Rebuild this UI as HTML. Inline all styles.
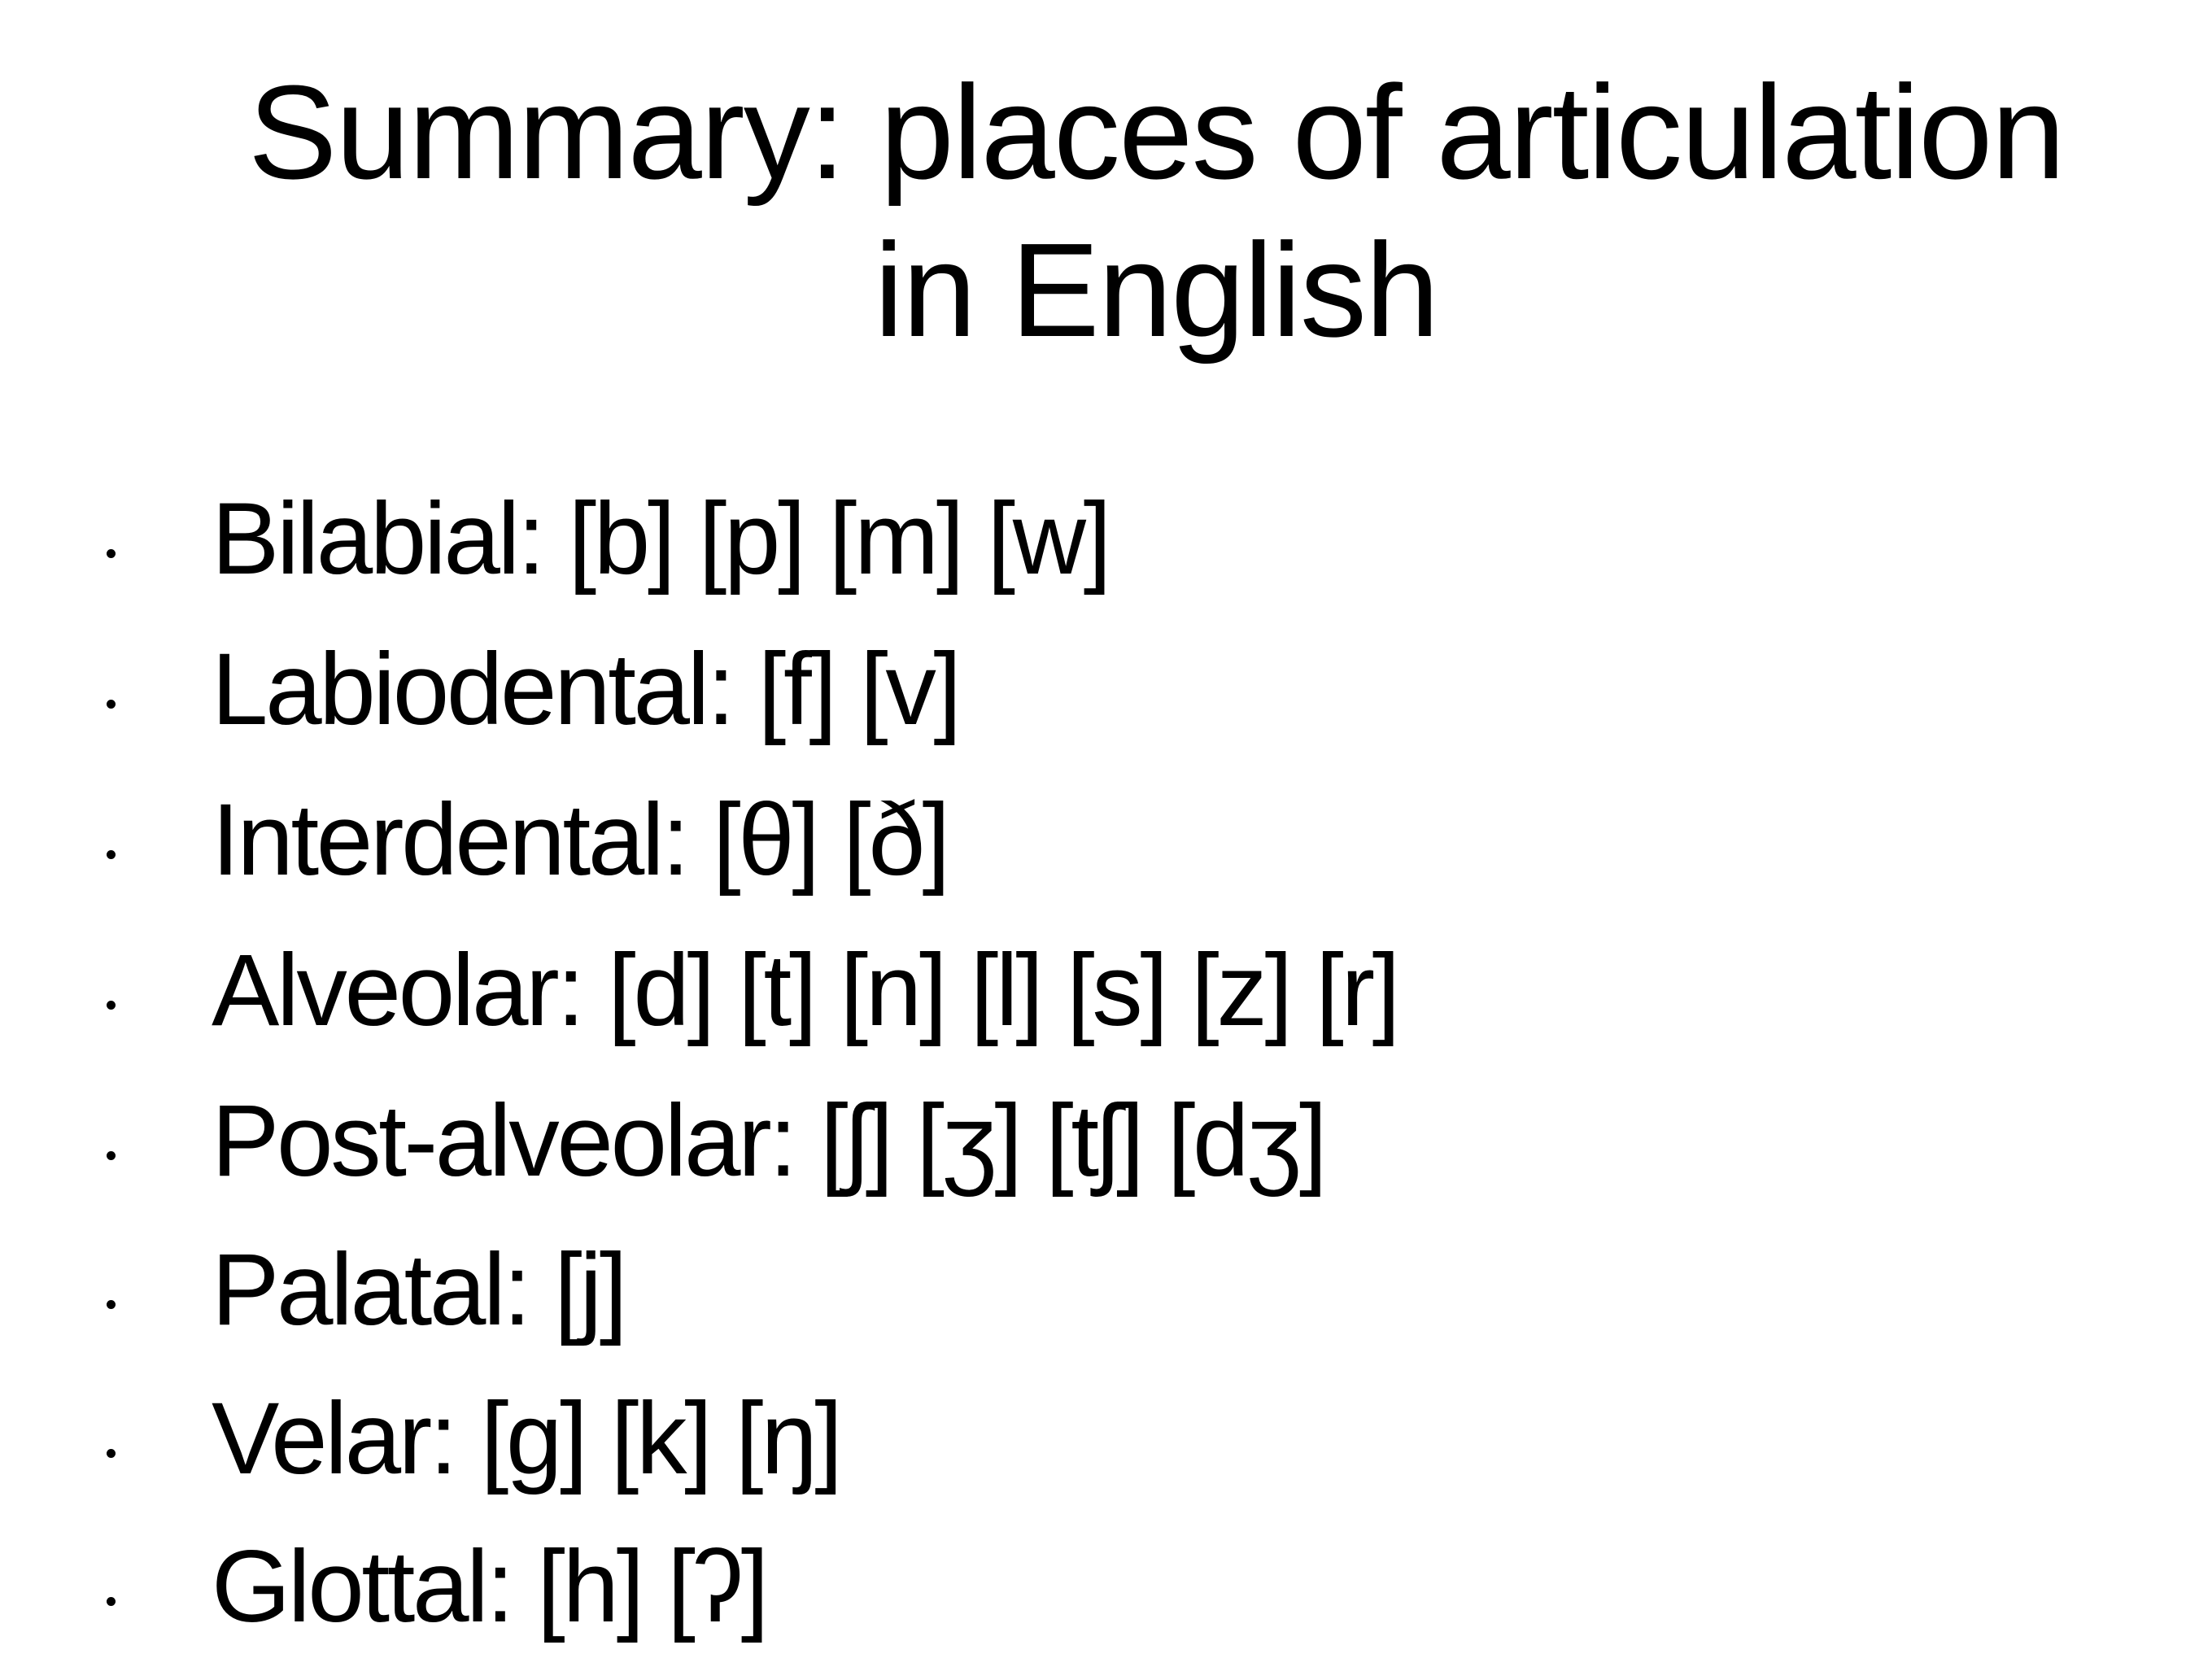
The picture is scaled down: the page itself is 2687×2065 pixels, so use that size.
<!DOCTYPE html>
<html><head><meta charset="utf-8"><style>
html,body{margin:0;padding:0;background:#fff;}
body{width:2687px;height:2065px;position:relative;overflow:hidden;font-family:"Liberation Sans","DejaVu Sans",sans-serif;color:#000;}
.t{position:absolute;left:221px;width:2400px;text-align:center;font-size:164px;line-height:164px;white-space:nowrap;letter-spacing:-1.8px;}
.b{position:absolute;left:260px;font-size:125px;line-height:125px;white-space:nowrap;letter-spacing:-3.4px;}
.d{position:absolute;left:131px;width:11px;height:11px;background:#000;border-radius:50%;}
</style></head><body>
<div class="t" style="top:81px">Summary: places of articulation</div>
<div class="t" style="top:275px">in English</div>

<div class="b" style="top:600px">Bilabial: [b] [p] [m] [w]</div><div class="d" style="top:675px"></div>
<div class="b" style="top:785px">Labiodental: [f] [v]</div><div class="d" style="top:860px"></div>
<div class="b" style="top:970px">Interdental: [θ] [ð]</div><div class="d" style="top:1045px"></div>
<div class="b" style="top:1155px">Alveolar: [d] [t] [n] [l] [s] [z] [r]</div><div class="d" style="top:1230px"></div>
<div class="b" style="top:1340px">Post-alveolar: [ʃ] [ʒ] [tʃ] [dʒ]</div><div class="d" style="top:1415px"></div>
<div class="b" style="top:1523px">Palatal: [j]</div><div class="d" style="top:1598px"></div>
<div class="b" style="top:1706px">Velar: [g] [k] [ŋ]</div><div class="d" style="top:1781px"></div>
<div class="b" style="top:1888px">Glottal: [h] [ʔ]</div><div class="d" style="top:1963px"></div>
</body></html>
